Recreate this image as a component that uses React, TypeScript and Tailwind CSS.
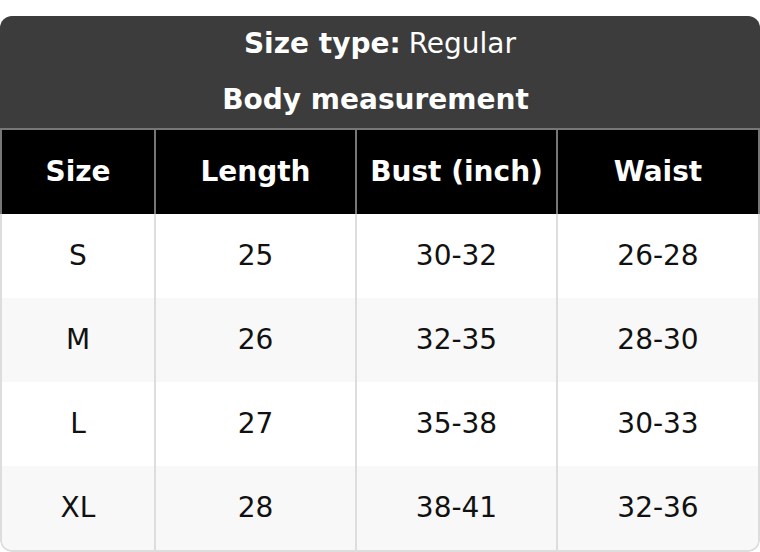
import React from 'react'

const rows = [
  { size: 'S', length: '25', bust: '30-32', waist: '26-28' },
  { size: 'M', length: '26', bust: '32-35', waist: '28-30' },
  { size: 'L', length: '27', bust: '35-38', waist: '30-33' },
  { size: 'XL', length: '28', bust: '38-41', waist: '32-36' },
]

const headers = ['Size', 'Length', 'Bust (inch)', 'Waist']

export default function App() {
  return (
    <div className="w-[760px] h-[552px] bg-white pt-4 font-['DejaVu_Sans',sans-serif] text-[28px]">
      <div className="rounded-xl overflow-hidden">
        {/* title block */}
        <div className="bg-[#3c3c3c] text-white">
          <div className="h-14 flex items-center justify-center">
            <span className="font-bold">Size type:</span>
            <span className="ml-2">Regular</span>
          </div>
          <div className="h-14 flex items-center justify-center font-bold pr-[9px]">Body measurement</div>
        </div>

        {/* column headers */}
        <div className="grid grid-cols-[152px_201px_201px_202px] bg-black text-white font-bold border-t-2 border-x-2 border-[#777]">
          {headers.map((h, i) => (
            <div
              key={h}
              className={
                'h-[84px] flex items-center justify-center' + (i > 0 ? ' border-l-2 border-[#777]' : '')
              }
            >
              {h}
            </div>
          ))}
        </div>

        {/* body rows */}
        <div className="border-x-2 border-b-2 border-[#dddddd] rounded-b-xl overflow-hidden text-[#111]">
          {rows.map((r, idx) => (
            <div
              key={r.size}
              className={
                'grid grid-cols-[152px_201px_201px_202px] h-[84px]' + (idx % 2 === 1 ? ' bg-[#f8f8f8]' : ' bg-white')
              }
            >
              <div className="flex items-center justify-center">{r.size}</div>
              <div className="flex items-center justify-center border-l-2 border-[#dddddd]">{r.length}</div>
              <div className="flex items-center justify-center border-l-2 border-[#dddddd]">{r.bust}</div>
              <div className="flex items-center justify-center border-l-2 border-[#dddddd]">{r.waist}</div>
            </div>
          ))}
        </div>
      </div>
    </div>
  )
}
